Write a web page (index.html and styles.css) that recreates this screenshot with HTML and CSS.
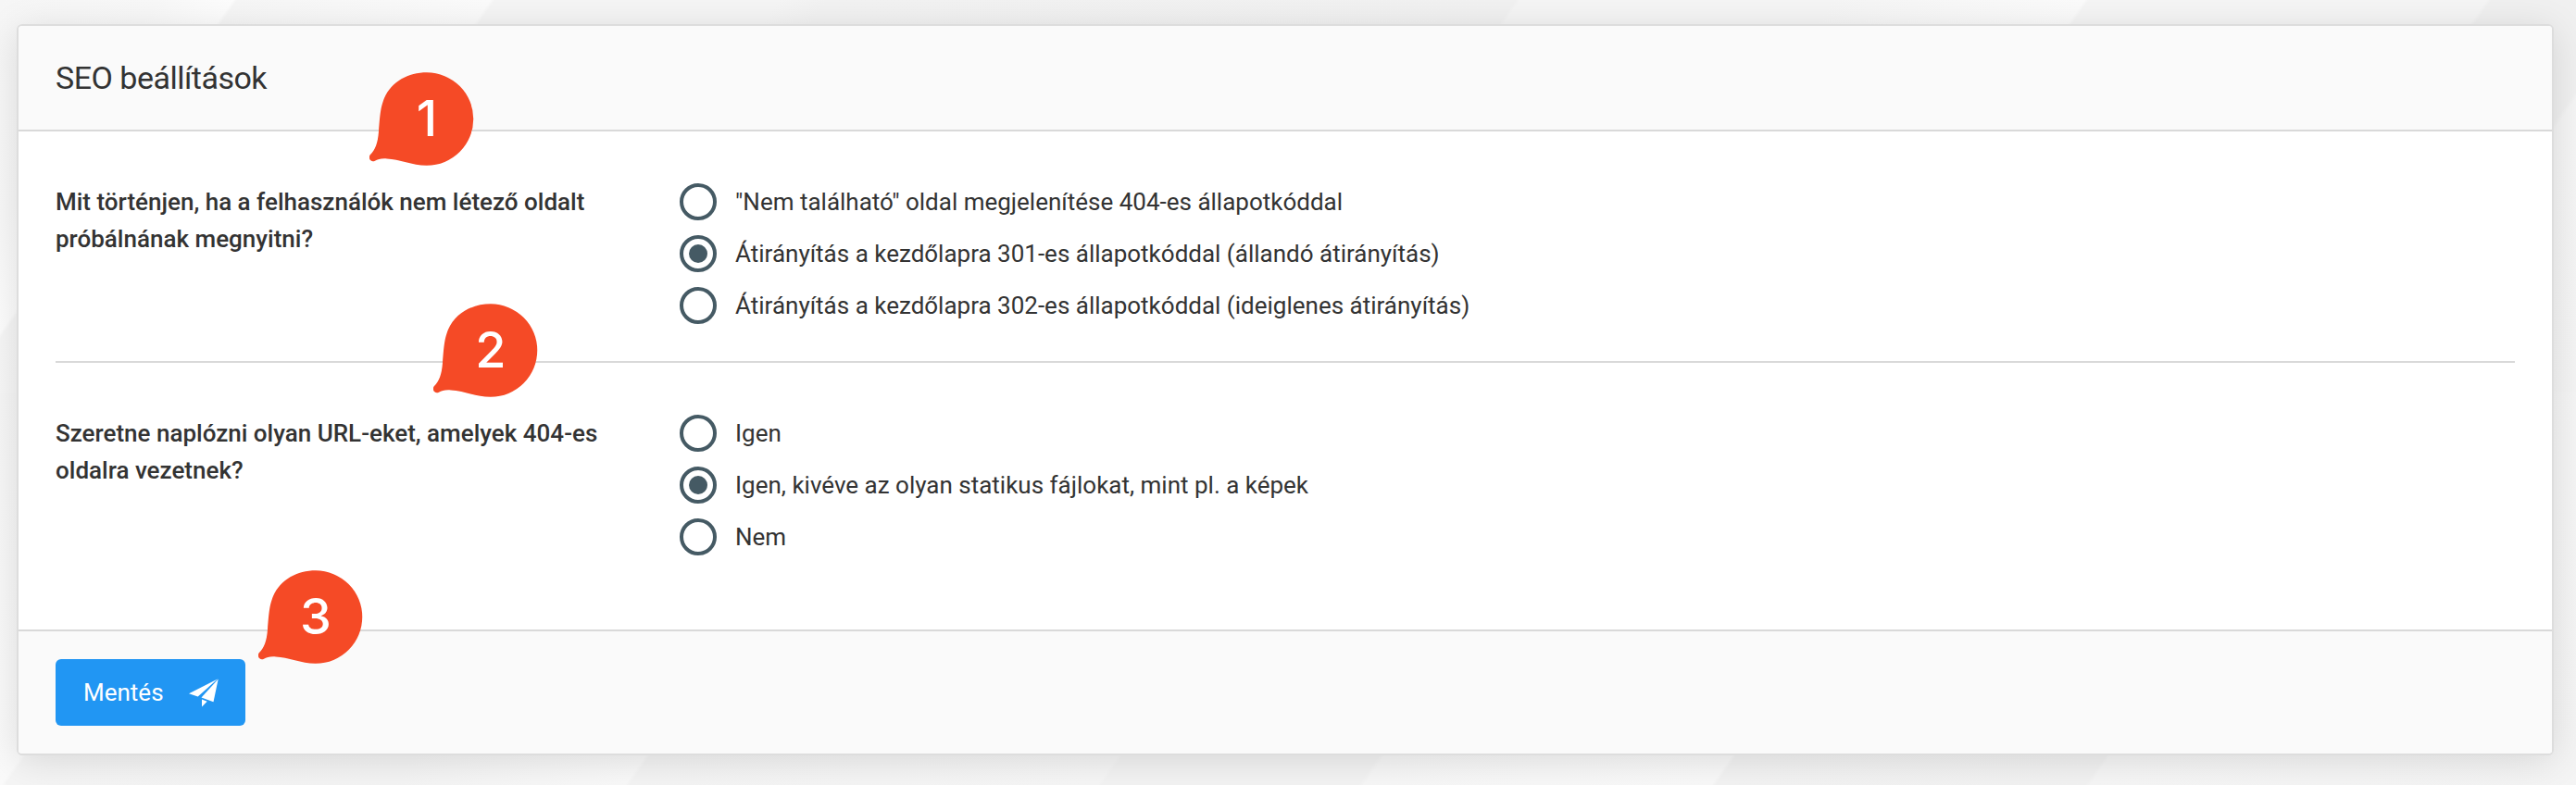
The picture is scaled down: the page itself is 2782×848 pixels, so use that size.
FILE: index.html
```html
<!DOCTYPE html>
<html lang="hu">
<head>
    <meta charset="UTF-8">
    <meta name="viewport" content="width=device-width, initial-scale=1.0">
    <title>SEO beállítások</title>
    <link rel="stylesheet" href="styles.css">
</head>
<body>
    <form class="panel">
        <div class="panel-heading">
            <h1>SEO beállítások</h1>
        </div>
        <div class="panel-body">
            <div class="form-group">
                <div class="group-label">Mit történjen, ha a felhasználók nem létező oldalt próbálnának megnyitni?</div>
                <div class="group-options">
                    <label class="radio"><input type="radio" name="notfound"><span>"Nem található" oldal megjelenítése 404-es állapotkóddal</span></label>
                    <label class="radio"><input type="radio" name="notfound" checked><span>Átirányítás a kezdőlapra 301-es állapotkóddal (állandó átirányítás)</span></label>
                    <label class="radio"><input type="radio" name="notfound"><span>Átirányítás a kezdőlapra 302-es állapotkóddal (ideiglenes átirányítás)</span></label>
                </div>
            </div>
            <div class="form-group">
                <div class="group-label">Szeretne naplózni olyan URL-eket, amelyek 404-es oldalra vezetnek?</div>
                <div class="group-options">
                    <label class="radio"><input type="radio" name="log"><span>Igen</span></label>
                    <label class="radio"><input type="radio" name="log" checked><span>Igen, kivéve az olyan statikus fájlokat, mint pl. a képek</span></label>
                    <label class="radio"><input type="radio" name="log"><span>Nem</span></label>
                </div>
            </div>
        </div>
        <div class="panel-footer">
            <button type="button" class="btn">
                Mentés
                <svg class="btn-icon" viewBox="0 0 32 32" width="32" height="32">
                    <path d="M0 17.3 31 1.5 9.7 20.4z"/>
                    <path d="M31.7 1.5 26.5 26.3 13.5 21.5z"/>
                    <path d="M14 23.5 19.7 25.7 14 31.5z"/>
                </svg>
            </button>
        </div>
    </form>

    <!-- numbered markers -->
    <svg class="marker marker-1" viewBox="0 0 113 102">
        <path d="M62 .3A50 50 0 0 1 62 100.8C47 101 32 94 19 93.5C13 93 9 94 6 95.7C1 98-2 92 1 89C6 84 9 77 10 64C11.5 45 12 38 16 28C24 10 42 .3 62 .3Z"/>
        <text x="62" y="69">1</text>
    </svg>
    <svg class="marker marker-2" viewBox="0 0 113 102">
        <path d="M62 .3A50 50 0 0 1 62 100.8C47 101 32 94 19 93.5C13 93 9 94 6 95.7C1 98-2 92 1 89C6 84 9 77 10 64C11.5 45 12 38 16 28C24 10 42 .3 62 .3Z"/>
        <text x="62" y="69">2</text>
    </svg>
    <svg class="marker marker-3" viewBox="0 0 113 102">
        <path d="M62 .3A50 50 0 0 1 62 100.8C47 101 32 94 19 93.5C13 93 9 94 6 95.7C1 98-2 92 1 89C6 84 9 77 10 64C11.5 45 12 38 16 28C24 10 42 .3 62 .3Z"/>
        <text x="62" y="69">3</text>
    </svg>
</body>
</html>
```
FILE: styles.css
```css
* {
    box-sizing: border-box;
}
body {
    margin: 0;
    height: 848px;
    padding: 26px 24px 32px 18px;
    overflow: hidden;
    position: relative;
    color: #333;
    font-family: Roboto, sans-serif;
    font-size: 26px;
    line-height: 40px;
    background-color: #f5f5f5;
    /* diagonal light streaks, upper and lower half */
    background-image:
        linear-gradient(125deg, #f6f6f6 0, #f8f8f8 140px, #fdfdfd 206px, #f6f6f6 210px, #fbfbfb 434px, #f5f5f5 438px, #f5f5f5 689px, #f2f2f2 732px, #f1f1f1 1341px, #f5f5f5 1345px, #f5f5f5 1621px, #fbfbfb 1844px, #f5f5f5 1848px, #f5f5f5 2200px, #f0f0f0 2204px, #f0f0f0 2335px, #f5f5f5 2340px, #f4f4f4 100%),
        linear-gradient(125deg, #f6f6f6 0, #fafafa 244px, #f5f5f5 248px, #f4f4f4 590px, #f9f9f9 796px, #f4f4f4 800px, #f6f6f6 1214px, #f3f3f3 1218px, #f3f3f3 1445px, #f7f7f7 1450px, #f9f9f9 1757px, #f3f3f3 1761px, #f2f2f2 2088px, #f6f6f6 2092px, #f4f4f4 100%);
    background-size: 100% 424px;
    background-position: top, bottom;
    background-repeat: no-repeat;
}
.panel {
    height: 790px;
    display: flex;
    flex-direction: column;
    background-color: #fff;
    border: 2px solid #ddd;
    border-radius: 6px;
    box-shadow: 0 6px 40px rgba(0, 0, 0, 0.12);
}
.panel-heading {
    height: 114px;
    padding: 0 40px;
    display: flex;
    align-items: center;
    background-color: #fafafa;
    border-bottom: 2px solid #d9d9d9;
    border-radius: 4px 4px 0 0;
}
.panel-heading h1 {
    margin: 0;
    font-size: 34px;
    font-weight: 400;
    letter-spacing: -0.015em;
}
.panel-body {
    flex: 1;
    padding: 0 40px;
}
.form-group {
    display: flex;
    padding: 56px 0 40px;
}
.form-group + .form-group {
    border-top: 2px solid #d9d9d9;
}
.group-label {
    width: 674px;
    padding-right: 60px;
    font-weight: 500;
}
.group-options {
    display: flex;
    flex-direction: column;
    gap: 16px;
}
.radio {
    display: flex;
    gap: 20px;
    height: 40px;
}
.radio input {
    appearance: none;
    width: 40px;
    height: 40px;
    margin: 0;
    border: 4px solid #455a64;
    border-radius: 50%;
    display: grid;
    place-content: center;
}
.radio input:checked::before {
    content: "";
    width: 20px;
    height: 20px;
    border-radius: 50%;
    background-color: #455a64;
}
.panel-footer {
    height: 136px;
    margin-bottom: -2px;
    padding: 30px 40px;
    background-color: #fafafa;
    background-clip: padding-box;
    border-top: 2px solid #d9d9d9;
    border-bottom: 2px solid #ddd;
    border-radius: 0 0 4px 4px;
}
.btn {
    display: flex;
    align-items: center;
    gap: 27px;
    height: 72px;
    width: 205px;
    padding: 0 30px;
    border: none;
    border-radius: 6px;
    background-color: #2196f3;
    color: #fff;
    font: inherit;
    cursor: pointer;
}
.btn-icon {
    flex: none;
    fill: #fff;
}
.marker {
    position: absolute;
    width: 113px;
    height: 102px;
    fill: #f54a26;
}
.marker text {
    fill: #fff;
    font-family: Inter, sans-serif;
    font-size: 54px;
    font-weight: 500;
    text-anchor: middle;
}
.marker-1 {
    left: 399px;
    top: 78px;
}
.marker-2 {
    left: 468px;
    top: 328px;
}
.marker-3 {
    left: 279px;
    top: 616px;
}
```
